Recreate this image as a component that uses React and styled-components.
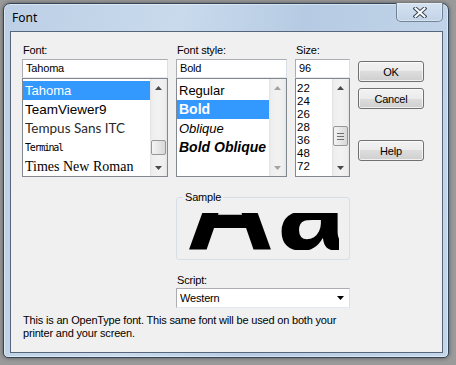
import React from 'react'
import styled, { createGlobalStyle } from 'styled-components'

const GlobalStyle = createGlobalStyle`
    html, body {
        margin: 0;
        padding: 0;
        background: #9a9a9a;
    }
    body {
        font-family: "Liberation Sans", Arial, sans-serif;
        font-size: 11px;
        letter-spacing: -0.18px;
        color: #000;
    }
`;

const fontItems = [
    { name: 'Tahoma', family: '"Liberation Sans", sans-serif', size: 13, selected: true },
    { name: 'TeamViewer9', family: '"Liberation Sans", sans-serif', size: 13.5 },
    { name: 'Tempus Sans ITC', family: 'Lato, sans-serif', size: 13.5, color: '#2a2a2a' },
    { name: 'Terminal', family: '"DejaVu Sans Mono", monospace', size: 10, spacing: -1.3 },
    { name: 'Times New Roman', family: '"Liberation Serif", serif', size: 14 },
];

const styleItems = [
    { name: 'Regular', size: 13 },
    { name: 'Bold', size: 14, bold: true, selected: true },
    { name: 'Oblique', size: 13, italic: true },
    { name: 'Bold Oblique', size: 14, bold: true, italic: true },
];

const sizes = ['22', '24', '26', '28', '36', '48', '72'];

function Arrow({ up, disabled }) {
    return (
        <svg width="7" height="4" viewBox="0 0 7 4">
            <path
                d={up ? 'M0 4 L3.5 0 L7 4 Z' : 'M0 0 L7 0 L3.5 4 Z'}
                fill={disabled ? '#a3a3a3' : '#4a4a4a'}
            />
        </svg>
    )
}

function ScrollBar({ thumbOffset, thumbHeight, grip, disabled }) {
    return (
        <Track>
            <ArrowButton><Arrow up disabled={disabled} /></ArrowButton>
            {thumbHeight ? (
                <>
                    <Spacer $h={thumbOffset} />
                    <Thumb $h={thumbHeight}>
                        {grip && (
                            <svg width="7" height="7" viewBox="0 0 7 7">
                                <path d="M0 0.5 H7 M0 3.5 H7 M0 6.5 H7" stroke="#6f6f6f" strokeWidth="1" />
                            </svg>
                        )}
                    </Thumb>
                </>
            ) : null}
            <Fill />
            <ArrowButton><Arrow disabled={disabled} /></ArrowButton>
        </Track>
    )
}

function CloseGlyph() {
    return (
        <svg width="14" height="11" viewBox="0 0 14 11">
            <path d="M2.5 1.5 L11.5 9.5 M11.5 1.5 L2.5 9.5" stroke="#3b4656" strokeWidth="4" strokeLinecap="square" />
            <path d="M2.5 1.5 L11.5 9.5 M11.5 1.5 L2.5 9.5" stroke="#ffffff" strokeWidth="2" strokeLinecap="square" />
        </svg>
    )
}

function App() {
    return (
        <>
            <GlobalStyle />
            <Screen>
                <Window>
                    <TitleBar>
                        <Title>Font</Title>
                        <CloseButton><CloseGlyph /></CloseButton>
                    </TitleBar>
                    <Client>
                        <Column>
                            <Label>Font:</Label>
                            <TextBox>Tahoma</TextBox>
                            <ListBox>
                                <Rows $pad={2}>
                                    {fontItems.map((f) => (
                                        <FontRow
                                            key={f.name}
                                            $selected={f.selected}
                                            $family={f.family}
                                            $size={f.size}
                                            $color={f.color}
                                            $spacing={f.spacing}
                                        >
                                            {f.name}
                                        </FontRow>
                                    ))}
                                </Rows>
                                <ScrollBar thumbOffset={44} thumbHeight={15} />
                            </ListBox>
                        </Column>

                        <Column>
                            <Label>Font style:</Label>
                            <TextBox>Bold</TextBox>
                            <ListBox>
                                <Rows $pad={2}>
                                    {styleItems.map((s) => (
                                        <StyleRow
                                            key={s.name}
                                            $selected={s.selected}
                                            $bold={s.bold}
                                            $italic={s.italic}
                                            $size={s.size}
                                        >
                                            {s.name}
                                        </StyleRow>
                                    ))}
                                </Rows>
                                <ScrollBar disabled />
                            </ListBox>
                        </Column>

                        <Column>
                            <Label>Size:</Label>
                            <TextBox>96</TextBox>
                            <ListBox>
                                <Rows $pad={3}>
                                    {sizes.map((s) => (
                                        <SizeRow key={s}>{s}</SizeRow>
                                    ))}
                                </Rows>
                                <ScrollBar thumbOffset={30} thumbHeight={20} grip />
                            </ListBox>
                        </Column>

                        <ButtonColumn>
                            <Button>OK</Button>
                            <Button>Cancel</Button>
                            <Button $gap={31}>Help</Button>
                        </ButtonColumn>

                        <SampleGroup>
                            <legend>Sample</legend>
                            <Preview>
                                <PreviewText>AaBbYyZz</PreviewText>
                            </Preview>
                        </SampleGroup>

                        <ScriptBlock>
                            <Label>Script:</Label>
                            <Combo>
                                <span>Western</span>
                                <svg width="7" height="4" viewBox="0 0 7 4">
                                    <path d="M0 0 L7 0 L3.5 4 Z" fill="#000" />
                                </svg>
                            </Combo>
                        </ScriptBlock>

                        <Description>
                            This is an OpenType font. This same font will be used on both your
                            <br />
                            printer and your screen.
                        </Description>
                    </Client>
                </Window>
            </Screen>
        </>
    )
}

const Screen = styled.div`
    width: 456px;
    height: 365px;
    padding: 3px;
    box-sizing: border-box;
`;

const Window = styled.div`
    width: 446px;
    height: 355px;
    box-sizing: border-box;
    display: flex;
    flex-direction: column;
    padding: 0 5px 4px 6px;
    border: 1px solid #34455a;
    border-radius: 7px 7px 5px 5px;
    background: linear-gradient(100deg, #bccfe5 0%, #c9daec 35%, #b6cbe3 60%, #c4d6ea 100%);
    box-shadow: inset 0 0 0 1px rgba(255, 255, 255, 0.45), 0 0 4px rgba(0, 0, 0, 0.45);
`;

const TitleBar = styled.div`
    height: 27px;
    display: flex;
    justify-content: space-between;
    align-items: flex-start;
`;

const Title = styled.div`
    font-family: "Noto Sans", "Open Sans", sans-serif;
    font-size: 12px;
    letter-spacing: 0;
    color: #000;
    padding: 6px 0 0 2px;
    line-height: 16px;
`;

const CloseButton = styled.div`
    width: 47px;
    height: 19px;
    margin-top: -1px;
    box-sizing: border-box;
    display: flex;
    align-items: center;
    justify-content: center;
    border: 1px solid rgba(52, 70, 95, 0.6);
    border-top: none;
    border-radius: 0 0 5px 5px;
    background: linear-gradient(#d5e2f0, #c3d4e8);
    box-shadow: inset 0 0 0 1px rgba(255, 255, 255, 0.35);
`;

const Client = styled.div`
    flex: 1;
    box-sizing: border-box;
    border: 1px solid #56657a;
    background: #f0f0f0;
    padding: 12px 0 0 11px;
    display: grid;
    grid-template-columns: 146px 111px 55px 66px;
    column-gap: 8px;
    align-content: start;
`;

const Column = styled.div`
    display: flex;
    flex-direction: column;
`;

const Label = styled.div`
    line-height: 13px;
    height: 13px;
    padding-left: 1px;
`;

const TextBox = styled.div`
    margin-top: 2px;
    height: 19px;
    box-sizing: border-box;
    background: #fff;
    border: 1px solid #abadb3;
    border-right-color: #dbdfe6;
    border-bottom-color: #e3e9ef;
    padding: 0 3px;
    line-height: 17px;
`;

const ListBox = styled.div`
    height: 99px;
    box-sizing: border-box;
    border: 1px solid #828790;
    background: #fff;
    display: flex;
    overflow: hidden;
`;

const Rows = styled.div`
    flex: 1;
    min-width: 0;
    padding-top: ${(p) => p.$pad}px;
    overflow: hidden;
`;

const Row = styled.div`
    height: 19px;
    line-height: 19px;
    padding-left: 2px;
    letter-spacing: 0;
    white-space: nowrap;
    background: ${(p) => (p.$selected ? '#3399ff' : 'transparent')};
    color: ${(p) => (p.$selected ? '#fff' : '#000')};
`;

const FontRow = styled(Row)`
    font-family: ${(p) => p.$family};
    font-size: ${(p) => p.$size}px;
    letter-spacing: ${(p) => p.$spacing || 0}px;
    color: ${(p) => (p.$selected ? '#fff' : p.$color || '#000')};
`;

const StyleRow = styled(Row)`
    font-size: ${(p) => p.$size}px;
    font-weight: ${(p) => (p.$bold ? 700 : 400)};
    font-style: ${(p) => (p.$italic ? 'italic' : 'normal')};
`;

const SizeRow = styled.div`
    height: 13px;
    line-height: 13px;
    font-size: 11.5px;
    letter-spacing: 0;
    padding-left: 1px;
`;

const Track = styled.div`
    width: 17px;
    flex: none;
    display: flex;
    flex-direction: column;
    background: linear-gradient(to right, #e2e2e2 0, #eeeeee 2px, #f2f2f2 50%, #eeeeee 15px, #e2e2e2 17px);
`;

const ArrowButton = styled.div`
    height: 17px;
    flex: none;
    display: flex;
    align-items: center;
    justify-content: center;
`;

const Spacer = styled.div`
    height: ${(p) => p.$h}px;
    flex: none;
`;

const Fill = styled.div`
    flex: 1;
`;

const Thumb = styled.div`
    height: ${(p) => p.$h}px;
    flex: none;
    margin: 0 1px;
    box-sizing: border-box;
    border: 1px solid #979797;
    border-radius: 2px;
    background: linear-gradient(to right, #f4f4f4, #e6e6e6 50%, #d8d8d8);
    display: flex;
    align-items: center;
    justify-content: center;
`;

const ButtonColumn = styled.div`
    display: flex;
    flex-direction: column;
    padding-top: 17px;
    gap: 6px;
`;

const Button = styled.div`
    height: 21px;
    box-sizing: border-box;
    margin-top: ${(p) => (p.$gap ? p.$gap - 6 : 0)}px;
    border: 1px solid #707070;
    border-radius: 3px;
    background: linear-gradient(#f2f2f2 0%, #ebebeb 50%, #dddddd 50%, #cfcfcf 100%);
    box-shadow: inset 0 0 0 1px rgba(255, 255, 255, 0.7);
    display: flex;
    align-items: center;
    justify-content: center;
    font-size: 11px;
`;

const SampleGroup = styled.fieldset`
    grid-column: 2 / 4;
    margin: 14px 0 0 0;
    padding: 0 10px 9px 11px;
    border: 1px solid #d5dfe5;
    border-radius: 3px;
    min-width: 0;

    legend {
        padding: 0 2px;
        margin-left: -5px;
        line-height: 13px;
        font-size: 11px;
    }
`;

const Preview = styled.div`
    margin-top: 9px;
    height: 37px;
    overflow: hidden;
`;

const PreviewText = styled.div`
    font-family: "Liberation Sans", Arial, sans-serif;
    font-weight: 700;
    font-size: 122px;
    line-height: 122px;
    letter-spacing: 4px;
    margin-top: -66px;
    margin-left: -2px;
    white-space: nowrap;
    color: #000;
`;

const ScriptBlock = styled.div`
    grid-column: 2 / 4;
    margin-top: 14px;
    display: flex;
    flex-direction: column;
`;

const Combo = styled.div`
    margin-top: 1px;
    height: 20px;
    box-sizing: border-box;
    background: #fff;
    border: 1px solid #abadb3;
    border-right-color: #dbdfe6;
    border-bottom-color: #e3e9ef;
    display: flex;
    align-items: center;
    justify-content: space-between;
    padding: 0 5px 0 3px;
`;

const Description = styled.div`
    grid-column: 1 / 5;
    margin-top: 6px;
    line-height: 13px;
    padding-left: 1px;
`;

export default App
